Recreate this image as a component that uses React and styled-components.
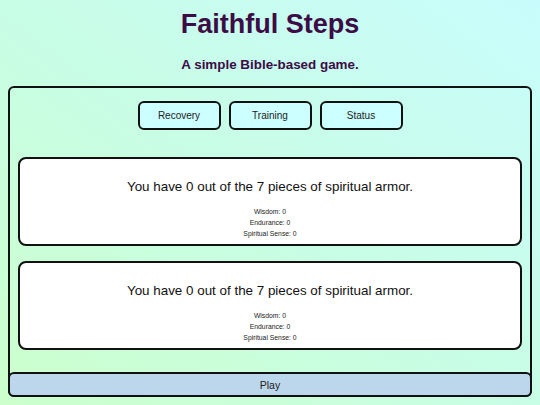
import React from "react";
import styled, { createGlobalStyle } from "styled-components";

const Global = createGlobalStyle`
  html, body { margin: 0; padding: 0; height: 100%; }
  body {
    font-family: "Liberation Sans", Arial, sans-serif;
    background: linear-gradient(to top right, #ccffcc 0%, #c8fde6 50%, #c8fcfc 100%);
    background-attachment: fixed;
  }
`;

const Page = styled.div`
  padding: 8px;
  box-sizing: border-box;
  height: 405px;
  display: flex;
  flex-direction: column;
`;

const Title = styled.h1`
  margin: 1px 0 0;
  font-size: 27px;
  line-height: 30px;
  font-weight: bold;
  text-align: center;
  color: #3d0b45;
`;

const Subtitle = styled.h2`
  margin: 18px 0 0;
  font-size: 13.4px;
  line-height: 16px;
  font-weight: bold;
  text-align: center;
  color: #3d0b45;
`;

const Panel = styled.div`
  margin-top: 13px;
  border: 2px solid #111;
  border-radius: 6px;
  height: 311px;
  box-sizing: border-box;
  display: flex;
  flex-direction: column;
`;

const Body = styled.div`
  flex: 1;
  padding: 13px 8px 0;
  display: flex;
  flex-direction: column;
`;

const Tabs = styled.div`
  display: flex;
  justify-content: center;
  gap: 8px;
  margin-bottom: 27px;
`;

const TabButton = styled.button`
  width: 83px;
  height: 29px;
  box-sizing: border-box;
  background: #ccffff;
  border: 2px solid #111;
  border-radius: 6px;
  font-family: "Liberation Sans", Arial, sans-serif;
  font-size: 10px;
  color: #222;
  padding: 0;
`;

const Cards = styled.div`
  display: flex;
  flex-direction: column;
  gap: 15px;
`;

const Card = styled.div`
  background: #fff;
  border: 2px solid #111;
  border-radius: 8px;
  height: 89px;
  box-sizing: border-box;
  padding: 20px 10px 5px;
  text-align: center;
`;

const Headline = styled.p`
  margin: 0 0 11px;
  font-size: 13.4px;
  line-height: 16px;
  color: #111;
`;

const Stat = styled.div`
  font-size: 6.8px;
  line-height: 11px;
  color: #222;
`;

const PlayButton = styled.button`
  margin: 0 -2px -2px;
  height: 25px;
  box-sizing: border-box;
  background: #bcd6ec;
  border: 2px solid #111;
  border-radius: 6px;
  font-family: "Liberation Sans", Arial, sans-serif;
  font-size: 10.5px;
  color: #222;
  padding: 0;
`;

const stats = ["Wisdom: 0", "Endurance: 0", "Spiritual Sense: 0"];

function ArmorCard() {
  return (
    <Card>
      <Headline>You have 0 out of the 7 pieces of spiritual armor.</Headline>
      {stats.map((s) => (
        <Stat key={s}>{s}</Stat>
      ))}
    </Card>
  );
}

export default function App() {
  return (
    <>
      <Global />
      <Page>
        <Title>Faithful Steps</Title>
        <Subtitle>A simple Bible-based game.</Subtitle>
        <Panel>
          <Body>
            <Tabs>
              <TabButton>Recovery</TabButton>
              <TabButton>Training</TabButton>
              <TabButton>Status</TabButton>
            </Tabs>
            <Cards>
              <ArmorCard />
              <ArmorCard />
            </Cards>
          </Body>
          <PlayButton>Play</PlayButton>
        </Panel>
      </Page>
    </>
  );
}
